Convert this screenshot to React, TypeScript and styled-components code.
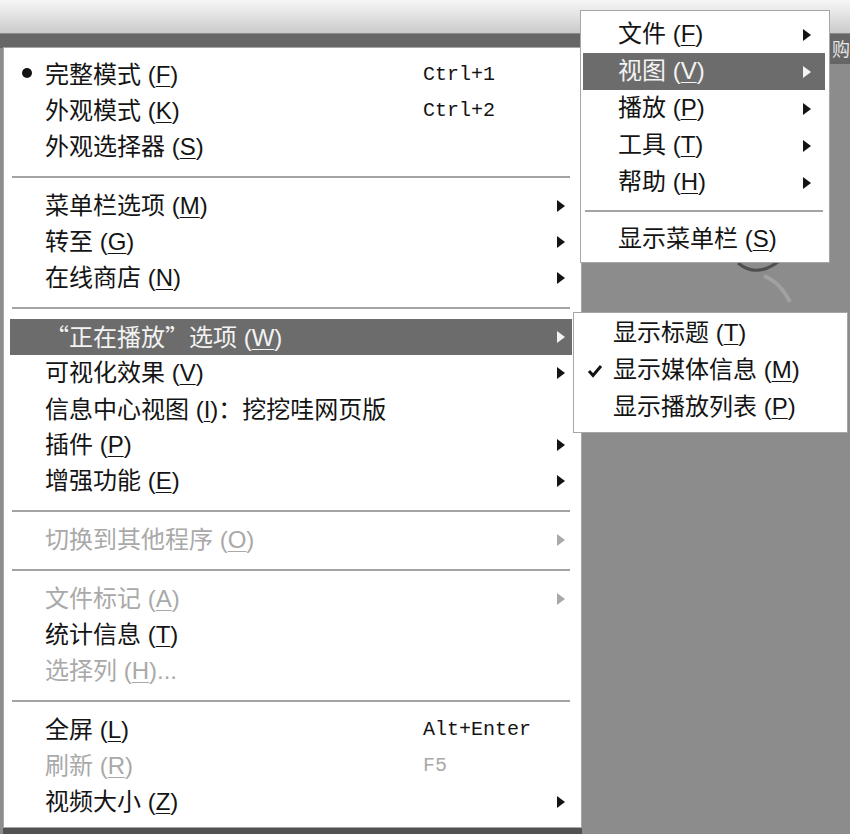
import styled, { createGlobalStyle, css } from "styled-components";

/* --- global --- */

const GlobalStyle = createGlobalStyle`
  html, body {
    margin: 0;
    padding: 0;
    background: #8c8c8c;
  }
  body {
    font-family: "Liberation Sans", "Noto Sans CJK SC", sans-serif;
  }
`;

/* --- backdrop --- */

const Screen = styled.div`
  position: relative;
  width: 850px;
  height: 834px;
  overflow: hidden;
  display: flex;
  flex-direction: column;
  background: #8c8c8c;
`;

const TitleBar = styled.div`
  flex: none;
  height: 33px;
  background: linear-gradient(#f6f6f6, #e6e6e6 40%, #cacaca);
  border-bottom: 1px solid #8a8a8a;
`;

const Strip = styled.div`
  display: flex;
  align-items: flex-start;
`;

const Band = styled.div`
  flex: 1;
  height: 14px;
  background: #666;
`;

const Tab = styled.div`
  width: 20px;
  height: 30px;
  box-sizing: border-box;
  padding-left: 2px;
  white-space: nowrap;
  background: #666;
  color: #e4e4e4;
  font-family: "Noto Sans CJK SC", sans-serif;
  font-size: 18px;
  line-height: 28px;
`;

const Swirl = styled.svg`
  position: absolute;
  left: 734px;
  top: 258px;
`;

/* --- menus --- */

type MenuProps = {
  $left: number;
  $top: number;
  $width: number;
  $pad: string;
  $cols: string;
  $row: number;
  $shadow?: boolean;
};

const Menu = styled.div<MenuProps>`
  position: absolute;
  left: ${(p) => p.$left}px;
  top: ${(p) => p.$top}px;
  width: ${(p) => p.$width}px;
  box-sizing: border-box;
  padding: ${(p) => p.$pad};
  background: #fff;
  border: 1px solid #a6a6a6;
  --cols: ${(p) => p.$cols};
  --row: ${(p) => p.$row}px;
  ${(p) =>
    p.$shadow &&
    css`
      box-shadow: 0 6px 0 #525252;
    `}
`;

type State = "normal" | "active" | "disabled";

const Row = styled.div<{ $state: State }>`
  display: grid;
  grid-template-columns: var(--cols);
  align-items: center;
  height: var(--row);
  white-space: nowrap;
  font-size: 24px;
  line-height: 1;
  color: #141414;

  ${(p) =>
    p.$state === "active" &&
    css`
      background: #6c6c6c;
      color: #f3f3f3;
    `}
  ${(p) =>
    p.$state === "disabled" &&
    css`
      color: #a9a9a9;
    `}
`;

const MarkCell = styled.div`
  display: flex;
  justify-content: center;
  align-items: center;
`;

const Bullet = styled.span`
  width: 10px;
  height: 10px;
  border-radius: 50%;
  background: currentColor;
  transform: translate(-1px, -2px);
`;

const Label = styled.span`
  line-height: 1.2;
`;

const Wide = styled.span`
  font-family: "Noto Sans CJK SC", sans-serif;
`;

const Key = styled.span`
  text-decoration: underline;
  text-decoration-thickness: 1px;
  text-underline-offset: 3px;
`;

const Shortcut = styled.span`
  font-family: "Liberation Mono", monospace;
  font-size: 20px;
  line-height: 1.2;
`;

const ArrowCell = styled.div`
  display: flex;
  align-items: center;
`;

const Arrow = styled.span`
  width: 0;
  height: 0;
  border-left: 8px solid currentColor;
  border-top: 6.5px solid transparent;
  border-bottom: 6.5px solid transparent;
`;

const Separator = styled.div<{ $h: number }>`
  display: flex;
  align-items: center;
  height: ${(p) => p.$h}px;
  padding: 0 2px;

  &::before {
    content: "";
    flex: 1;
    height: 2px;
    background: #a3a3a3;
  }
`;

/* --- data --- */

type Entry =
  | "sep"
  | {
      text: React.ReactNode;
      mark?: "bullet" | "check";
      shortcut?: string;
      sub?: boolean;
      state?: State;
    };

const k = (text: string, key: string, tail = "") => (
  <>
    {text} (<Key>{key}</Key>){tail}
  </>
);

const mainItems: Entry[] = [
  { text: k("完整模式", "F"), mark: "bullet", shortcut: "Ctrl+1" },
  { text: k("外观模式", "K"), shortcut: "Ctrl+2" },
  { text: k("外观选择器", "S") },
  "sep",
  { text: k("菜单栏选项", "M"), sub: true },
  { text: k("转至", "G"), sub: true },
  { text: k("在线商店", "N"), sub: true },
  "sep",
  {
    text: (
      <>
        <Wide>“正在播放”选项</Wide> (<Key>W</Key>)
      </>
    ),
    sub: true,
    state: "active",
  },
  { text: k("可视化效果", "V"), sub: true },
  {
    text: (
      <>
        信息中心视图 (<Key>I</Key>)<Wide>：挖挖哇网页版</Wide>
      </>
    ),
  },
  { text: k("插件", "P"), sub: true },
  { text: k("增强功能", "E"), sub: true },
  "sep",
  { text: k("切换到其他程序", "O"), sub: true, state: "disabled" },
  "sep",
  { text: k("文件标记", "A"), sub: true, state: "disabled" },
  { text: k("统计信息", "T") },
  { text: k("选择列", "H", "..."), state: "disabled" },
  "sep",
  { text: k("全屏", "L"), shortcut: "Alt+Enter" },
  { text: k("刷新", "R"), shortcut: "F5", state: "disabled" },
  { text: k("视频大小", "Z"), sub: true },
];

const barItems: Entry[] = [
  { text: k("文件", "F"), sub: true },
  { text: k("视图", "V"), sub: true, state: "active" },
  { text: k("播放", "P"), sub: true },
  { text: k("工具", "T"), sub: true },
  { text: k("帮助", "H"), sub: true },
  "sep",
  { text: k("显示菜单栏", "S") },
];

const nowPlayingItems: Entry[] = [
  { text: k("显示标题", "T") },
  { text: k("显示媒体信息", "M"), mark: "check" },
  { text: k("显示播放列表", "P") },
];

/* --- parts --- */

function CheckMark() {
  return (
    <svg width="16" height="14" viewBox="0 0 16 14">
      <polyline
        points="2,7 6,11.5 14,2"
        fill="none"
        stroke="currentColor"
        strokeWidth="3"
      />
    </svg>
  );
}

function MenuRows({ items, sepH }: { items: Entry[]; sepH: number }) {
  return (
    <>
      {items.map((it, i) =>
        it === "sep" ? (
          <Separator key={i} $h={sepH} />
        ) : (
          <Row key={i} $state={it.state ?? "normal"}>
            <MarkCell>
              {it.mark === "bullet" && <Bullet />}
              {it.mark === "check" && <CheckMark />}
            </MarkCell>
            <Label>{it.text}</Label>
            <Shortcut>{it.shortcut}</Shortcut>
            <ArrowCell>{it.sub && <Arrow />}</ArrowCell>
          </Row>
        )
      )}
    </>
  );
}

/* --- page --- */

export default function App() {
  return (
    <>
      <GlobalStyle />
      <Screen>
        <TitleBar />
        <Strip>
          <Band />
          <Tab>购</Tab>
        </Strip>

        <Swirl width="70" height="50" viewBox="0 0 70 50">
          <path
            d="M4 5 Q22 20 44 4"
            fill="none"
            stroke="#4f4f4f"
            strokeWidth="3"
          />
          <path
            d="M30 18 Q46 24 56 44"
            fill="none"
            stroke="#a9a9a9"
            strokeWidth="4"
            opacity="0.7"
          />
        </Swirl>

        <Menu
          $left={3}
          $top={47}
          $width={579}
          $pad="9px 9px 7px 6px"
          $cols="35px 378px 134px 15px"
          $row={36}
          $shadow
        >
          <MenuRows items={mainItems} sepH={23} />
        </Menu>

        <Menu
          $left={580}
          $top={10}
          $width={250}
          $pad="5px 4px 4px 2px"
          $cols="35px 1fr 0px 22px"
          $row={37}
        >
          <MenuRows items={barItems} sepH={20} />
        </Menu>

        <Menu
          $left={573}
          $top={312}
          $width={275}
          $pad="2px 2px 6px 2px"
          $cols="37px 1fr 0px 0px"
          $row={37}
        >
          <MenuRows items={nowPlayingItems} sepH={20} />
        </Menu>
      </Screen>
    </>
  );
}
